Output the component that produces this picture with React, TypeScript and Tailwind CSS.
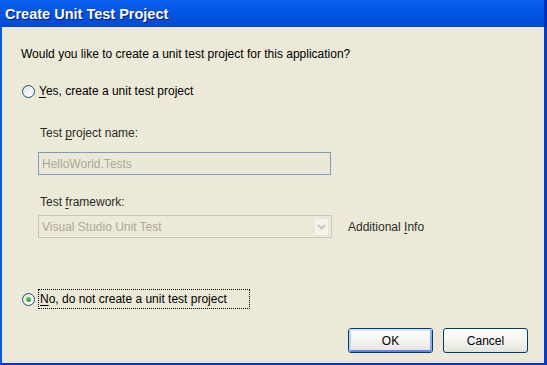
import React from 'react';

function Radio({ checked }: { checked?: boolean }) {
  return (
    <span className="relative flex h-[13px] w-[13px] shrink-0 items-center justify-center rounded-full border border-[#1C5180] bg-gradient-to-br from-[#DCDBD3] via-[#F4F3EE] to-white">
      {checked && (
        <span className="h-[5px] w-[5px] rounded-full bg-gradient-to-br from-[#6FD36F] to-[#1E9A1E]" />
      )}
    </span>
  );
}

function XpButton({ label, isDefault }: { label: string; isDefault?: boolean }) {
  return (
    <div className="flex h-[25px] w-[85px] items-center justify-center rounded-[3px] border border-[#003C74] bg-gradient-to-b from-white via-[#F6F5F1] to-[#E3E2DA]">
      <div
        className={`flex h-full w-full items-center justify-center rounded-[2px] ${
          isDefault ? 'border-2 border-t-[#CEE7FF] border-l-[#BCD4F6] border-r-[#89ADE4] border-b-[#6982EE]' : 'border-2 border-transparent'
        }`}
      >
        {label}
      </div>
    </div>
  );
}

export default function App() {
  return (
    <div
      className="flex h-[365px] w-[547px] flex-col overflow-hidden bg-[#ECE9D8] text-[12px] leading-[14px] text-black"
      style={{ fontFamily: '"Liberation Sans", Arial, sans-serif' }}
    >
      {/* Title bar */}
      <div className="flex h-[27px] shrink-0 items-center bg-gradient-to-b from-[#0A5FEE] via-[#0054E3] to-[#0049D0] pl-[5px]">
        <span className="text-[14.5px] font-bold text-white [text-shadow:1px_1px_0_#0A1883]">
          Create Unit Test Project
        </span>
        <div className="ml-auto h-full w-[3px] bg-[#0031B8]" />
      </div>

      <div className="flex flex-1 border-l-2 border-r-[3px] border-b-2 border-l-[#0A5AE8] border-r-[#0B3BC4] border-b-[#0831D9]">
        <div className="flex flex-1 flex-col pl-[19px] pt-[20px]">
          <div>Would you like to create a unit test project for this application?</div>

          {/* Yes */}
          <div className="mt-[23px] flex h-[14px] items-center pl-[1px]">
            <Radio />
            <span className="ml-[4px]">
              <span className="underline underline-offset-2">Y</span>es, create a unit test project
            </span>
          </div>

          <div className="flex flex-col pl-[17px] text-[#2B2B2B]">
            <div className="mt-[28px] pl-[2px]">
              Test <span className="underline underline-offset-2">p</span>roject name:
            </div>
            <div className="mt-[12px] flex h-[23px] w-[293px] items-center border border-[#7F9DB9] bg-[#EBE8D7] pl-[3px] text-[#ACA899]">
              HelloWorld.Tests
            </div>

            <div className="mt-[20px] pl-[2px]">
              Test <span className="underline underline-offset-2">f</span>ramework:
            </div>
            <div className="mt-[6px] flex items-center">
              <div className="flex h-[23px] w-[294px] items-center border border-[#C9C7BA] bg-[#ECE9D8] pl-[3px] pr-[2px] text-[#ACA899]">
                <span className="flex-1">Visual Studio Unit Test</span>
                <span className="flex h-[18px] w-[15px] items-center justify-center border border-[#E8E6DC] bg-[#F4F3EC]">
                  <svg width="9" height="6" viewBox="0 0 9 6">
                    <path d="M1 1 L4.5 4.5 L8 1" fill="none" stroke="#C9C7BA" strokeWidth="2" />
                  </svg>
                </span>
              </div>
              <span className="ml-[16px]">
                Additional <span className="underline underline-offset-2">I</span>nfo
              </span>
            </div>
          </div>

          {/* No */}
          <div className="mt-[51px] flex h-[20px] items-center pl-[1px]">
            <Radio checked />
            <span className="ml-[3px] flex h-[20px] w-[212px] items-center border border-dotted border-black pl-[1px]">
              <span className="underline underline-offset-2">N</span>o, do not create a unit test project
            </span>
          </div>

          <div className="mt-[19px] flex justify-end gap-[10px] pr-[16px]">
            <XpButton label="OK" isDefault />
            <XpButton label="Cancel" />
          </div>
        </div>
      </div>
    </div>
  );
}
